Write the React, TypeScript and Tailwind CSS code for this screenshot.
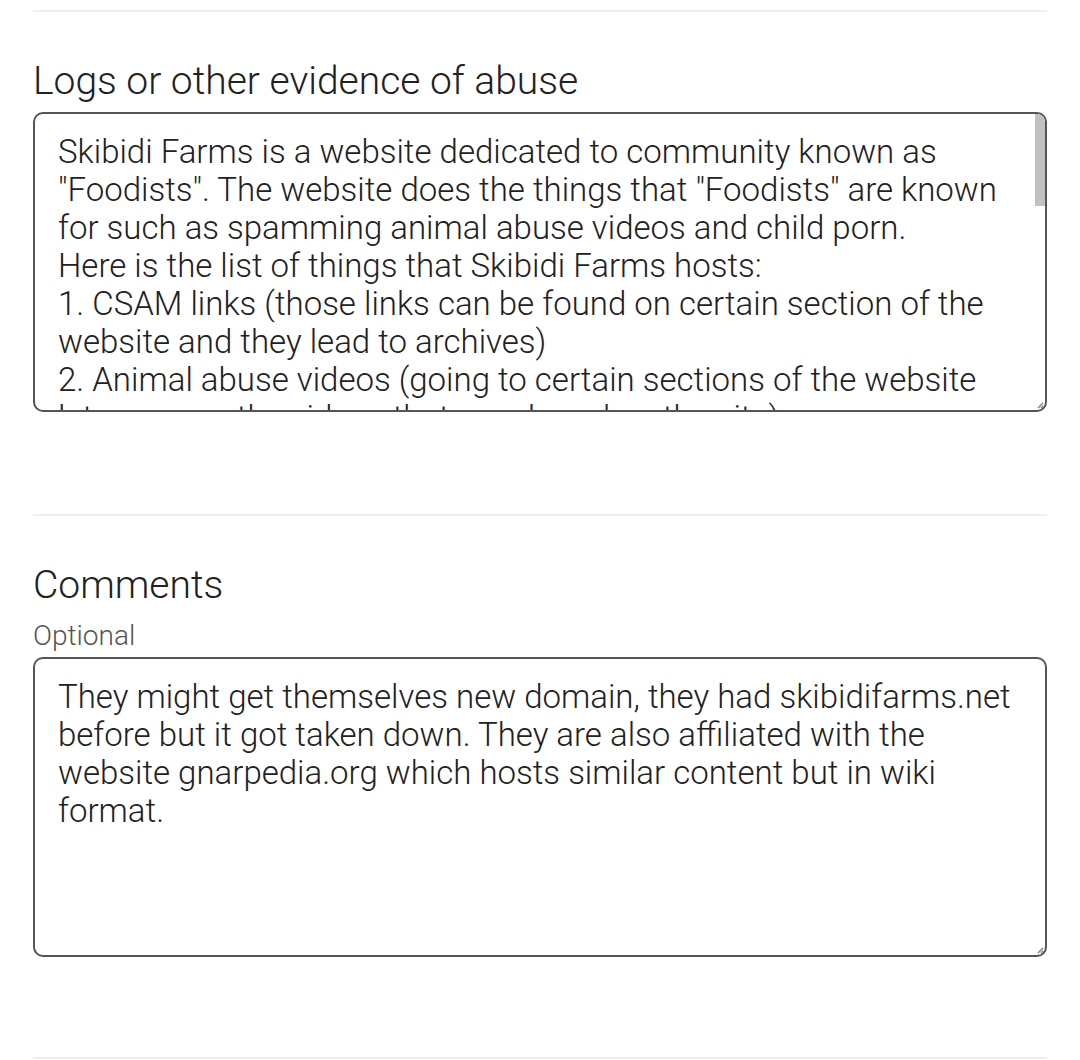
import React from "react";

const evidenceLines = [
  "Skibidi Farms is a website dedicated to community known as",
  "\"Foodists\". The website does the things that \"Foodists\" are known",
  "for such as spamming animal abuse videos and child porn.",
  "Here is the list of things that Skibidi Farms hosts:",
  "1. CSAM links (those links can be found on certain section of the",
  "website and they lead to archives)",
  "2. Animal abuse videos (going to certain sections of the website",
  "lets you see the videos that are shared on the site)",
];

const commentLines = [
  "They might get themselves new domain, they had skibidifarms.net",
  "before but it got taken down. They are also affiliated with the",
  "website gnarpedia.org which hosts similar content but in wiki",
  "format.",
];

function Grip() {
  return (
    <svg
      className="absolute bottom-[1px] right-[1px]"
      width="8"
      height="8"
      viewBox="0 0 8 8"
    >
      <path d="M7 2 L2 7 M7 5 L5 7" stroke="#777" strokeWidth="1.2" />
    </svg>
  );
}

function Field({
  lines,
  scroll,
}: {
  lines: string[];
  scroll?: boolean;
}) {
  return (
    <div className="relative h-[300px] w-full rounded-[10px] border-2 border-[#555555] bg-white">
      <div className="h-full overflow-hidden rounded-[8px] pl-[23px] pr-[20px] pt-[19px] text-[33px] font-light leading-[38px] text-[#212121]">
        {lines.map((l, i) => (
          <div key={i} className="whitespace-nowrap">
            {l}
          </div>
        ))}
      </div>
      {scroll && (
        <div className="absolute right-0 top-0 h-[92px] w-[10px] rounded-tr-[8px] bg-[#c1c1c1]" />
      )}
      <Grip />
    </div>
  );
}

export default function App() {
  return (
    <div
      className="min-h-[1060px] w-[1080px] bg-white px-[33px] pt-[10px] text-[#212121]"
      style={{ fontFamily: "Roboto, 'Noto Sans', sans-serif" }}
    >
      <div className="h-[2px] bg-[#eeeeee]" />

      <h2 className="mt-[45px] text-[39px] font-light leading-[48px]">
        Logs or other evidence of abuse
      </h2>
      <div className="mt-[7px]">
        <Field lines={evidenceLines} scroll />
      </div>

      <div className="mt-[102px] h-[2px] bg-[#eeeeee]" />

      <h2 className="mt-[45px] text-[39px] font-light leading-[48px]">
        Comments
      </h2>
      <div className="mt-[11px] text-[28px] font-light leading-[32px] text-[#555555]">
        Optional
      </div>
      <div className="mt-[5px]">
        <Field lines={commentLines} />
      </div>

      <div className="mt-[100px] h-[2px] bg-[#eeeeee]" />
    </div>
  );
}
